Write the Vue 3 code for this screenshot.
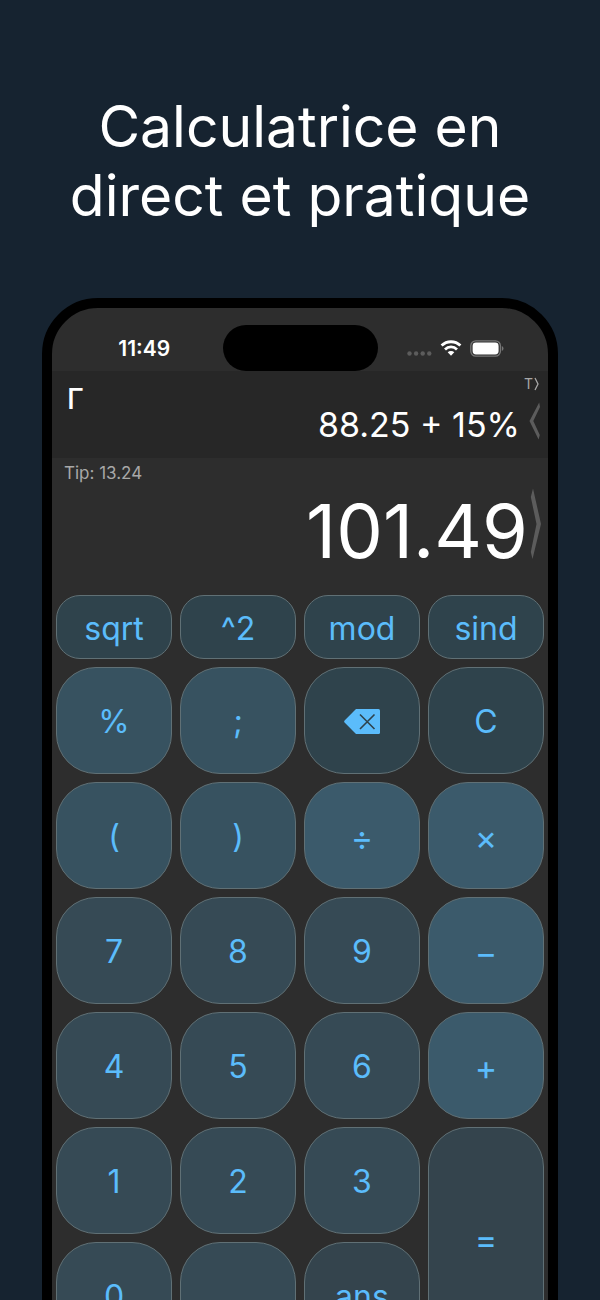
<template>
  <main class="page">
    <h1 class="headline">Calculatrice en<br />direct et pratique</h1>

    <section class="phone">
      <!-- Status bar -->
      <header class="status">
        <time class="clock">11:49</time>
        <span class="island"></span>
        <div class="signals">
          <svg class="dots" viewBox="0 0 25 5" aria-hidden="true">
            <circle cx="2.5" cy="2.5" r="2.2" />
            <circle cx="9.1" cy="2.5" r="2.2" />
            <circle cx="15.7" cy="2.5" r="2.2" />
            <circle cx="22.3" cy="2.5" r="2.2" />
          </svg>
          <svg class="wifi" viewBox="0 0 22 16" aria-hidden="true">
            <path d="M1.6 5.6a13.4 13.4 0 0 1 18.8 0" />
            <path d="M5 9.4a8.5 8.5 0 0 1 12 0" />
            <path class="fill" d="M7.7 12.3a4.7 4.7 0 0 1 6.6 0L11 15.8z" />
          </svg>
          <svg class="battery" viewBox="0 0 34 17" aria-hidden="true">
            <rect class="shell" x=".8" y=".8" width="29.6" height="15.4" rx="5" />
            <rect class="charge" x="2.6" y="2.6" width="26" height="11.8" rx="3.4" />
            <path class="cap" d="M31.8 6v5c1-.4 1.7-1.4 1.7-2.5S32.8 6.4 31.8 6z" />
          </svg>
        </div>
      </header>

      <!-- Expression being typed -->
      <div class="history">
        <span class="memory">Γ</span>
        <output class="expression">88.25 + 15%</output>
        <div class="side">
          <span class="mode">T<svg viewBox="0 0 5 14" aria-hidden="true"><path d="M1 1l3 6-3 6" /></svg></span>
          <button class="arrow" type="button" aria-label="Précédent">
            <svg class="prev" viewBox="0 0 12 38" aria-hidden="true">
              <path d="M10.2 .5L11 5 4.3 19 10.8 33 9.6 37.5 .5 19z" />
            </svg>
          </button>
        </div>
      </div>

      <!-- Live result -->
      <div class="result">
        <p class="tip">Tip: 13.24</p>
        <div class="result-row">
          <output class="total">101.49</output>
          <button class="arrow" type="button" aria-label="Suivant">
            <svg class="next" viewBox="0 0 11 72" aria-hidden="true">
              <path d="M3 .5L11 36 2.5 71 .8 64 6.5 36 .8 9z" />
            </svg>
          </button>
        </div>
      </div>

      <div class="keypad">
        <button
          v-for="key in keys"
          :key="key.id"
          type="button"
          :class="['key', key.kind]"
          :aria-label="key.name"
        >
          <svg v-if="key.id === 'del'" class="erase" viewBox="0 0 36 25" aria-hidden="true">
            <path class="tag" d="M12 0H34.5Q36 0 36 1.5V23.5Q36 25 34.5 25H12L0.6 13.6Q-.3 12.5 .6 11.4z" />
            <path class="cross" d="M16 5.5L30.5 20M30.5 5.5L16 20" />
          </svg>
          <template v-else>{{ key.label }}</template>
        </button>
      </div>
    </section>
  </main>
</template>

<script setup>
// kind drives the tint of the key
const keys = [
  { id: 'sqrt', label: 'sqrt', kind: 'func' },
  { id: 'pow', label: '^2', kind: 'func' },
  { id: 'mod', label: 'mod', kind: 'func' },
  { id: 'sind', label: 'sind', kind: 'func' },
  { id: 'pct', label: '%', kind: 'symbol' },
  { id: 'semi', label: ';', kind: 'symbol' },
  { id: 'del', label: '', kind: 'edit', name: 'Effacer' },
  { id: 'clear', label: 'C', kind: 'edit' },
  { id: 'open', label: '(', kind: 'symbol' },
  { id: 'close', label: ')', kind: 'symbol' },
  { id: 'div', label: '÷', kind: 'operator' },
  { id: 'mul', label: '×', kind: 'operator' },
  { id: '7', label: '7', kind: 'digit' },
  { id: '8', label: '8', kind: 'digit' },
  { id: '9', label: '9', kind: 'digit' },
  { id: 'sub', label: '−', kind: 'operator' },
  { id: '4', label: '4', kind: 'digit' },
  { id: '5', label: '5', kind: 'digit' },
  { id: '6', label: '6', kind: 'digit' },
  { id: 'add', label: '+', kind: 'operator' },
  { id: '1', label: '1', kind: 'digit' },
  { id: '2', label: '2', kind: 'digit' },
  { id: '3', label: '3', kind: 'digit' },
  { id: 'eq', label: '=', kind: 'equals' },
  { id: '0', label: '0', kind: 'digit' },
  { id: 'dot', label: '.', kind: 'digit' },
  { id: 'ans', label: 'ans', kind: 'answer' }
]
</script>

<style>
body {
  background: #162330;
}
</style>

<style scoped>
.page {
  box-sizing: border-box;
  height: 100vh;
  overflow: hidden;
  padding: 92px 42px 0;
  background: #162330;
  color: #fff;
  font-family: Inter, "Liberation Sans", sans-serif;
}

.headline {
  margin: 0 0 68px;
  font-size: 57px;
  font-weight: 400;
  line-height: 69px;
  text-align: center;
  white-space: nowrap;
}

/* ---------- Phone ---------- */
.phone {
  border: 10px solid #000;
  border-radius: 56px;
  background: #2d2d2d;
  overflow: hidden;
}

.status {
  display: grid;
  grid-template-columns: 1fr 155px 1fr;
  align-items: center;
  justify-items: center;
  height: 46px;
  padding: 17px 14px 0;
}

.clock {
  font-size: 21px;
  font-weight: 600;
}

.island {
  width: 155px;
  height: 46px;
  border-radius: 23px;
  background: #000;
}

.signals {
  display: flex;
  align-items: center;
  gap: 8px;
}

.dots {
  width: 25px;
  height: 5px;
  margin-top: 10px;
  fill: #5c5c5c;
}

.wifi {
  width: 22px;
  height: 16px;
  fill: none;
  stroke: #fff;
  stroke-width: 2.8;
}

.wifi .fill {
  fill: #fff;
  stroke: none;
}

.battery {
  width: 34px;
  height: 17px;
}

.shell {
  fill: none;
  stroke: #777;
  stroke-width: 1.3;
}

.charge {
  fill: #fff;
}

.cap {
  fill: #777;
}

/* ---------- Displays ---------- */
.history {
  display: flex;
  height: 87px;
  padding: 0 7px 0 15px;
  background: #272727;
}

.memory {
  padding-top: 11px;
  font-size: 29px;
  font-weight: 500;
  line-height: 34px;
}

.expression {
  flex: 1;
  align-self: flex-end;
  padding-bottom: 12px;
  font-size: 34px;
  line-height: 42px;
  text-align: right;
}

.side {
  display: flex;
  flex-direction: column;
  align-items: flex-end;
  gap: 11px;
  width: 21px;
  padding-top: 5px;
}

.mode {
  display: flex;
  align-items: center;
  gap: 1px;
  padding-right: 2px;
  color: #a8a8a8;
  font-size: 14px;
  line-height: 15px;
}

.mode svg {
  width: 5px;
  height: 14px;
  fill: none;
  stroke: #a8a8a8;
  stroke-width: 1.3;
}

.arrow {
  display: block;
  margin: 0;
  padding: 0;
  border: 0;
  background: none;
}

.arrow svg {
  display: block;
  fill: #5c5c5c;
}

.prev {
  width: 12px;
  height: 38px;
}

.next {
  width: 11px;
  height: 72px;
}

.result {
  padding: 6px 7px 21px 12px;
}

.tip {
  margin: 0 0 6px;
  color: #a8a8a8;
  font-size: 17px;
  line-height: 18px;
}

.result-row {
  display: flex;
  align-items: flex-start;
  justify-content: flex-end;
  gap: 2px;
}

.total {
  font-size: 74px;
  line-height: 86px;
}

/* ---------- Keypad ---------- */
.keypad {
  display: grid;
  grid-template-columns: repeat(4, 1fr);
  grid-template-rows: 64px;
  grid-auto-rows: 107px;
  gap: 8px;
  padding: 0 4px 4px;
}

.key {
  display: flex;
  align-items: center;
  justify-content: center;
  min-width: 0;
  padding: 2px 0 0;
  border: 1px solid #607075;
  border-radius: 40px;
  color: #5bbcfb;
  font-family: inherit;
  font-size: 32px;
  font-weight: 400;
}

.func {
  border-radius: 24px;
  background: #2f434c;
}

.symbol {
  background: #375260;
}

.edit {
  background: #2f434c;
}

.operator {
  padding-top: 4px;
  background: #3b5a6b;
  font-size: 34px;
}

.digit {
  background: #364a55;
}

.answer,
.equals {
  background: #34444d;
}

.equals {
  grid-row: span 2;
  font-size: 34px;
}

.erase {
  width: 36px;
  height: 25px;
}

.tag {
  fill: #5bbcfb;
}

.cross {
  fill: none;
  stroke: #2f434c;
  stroke-width: 1.6;
}
</style>
